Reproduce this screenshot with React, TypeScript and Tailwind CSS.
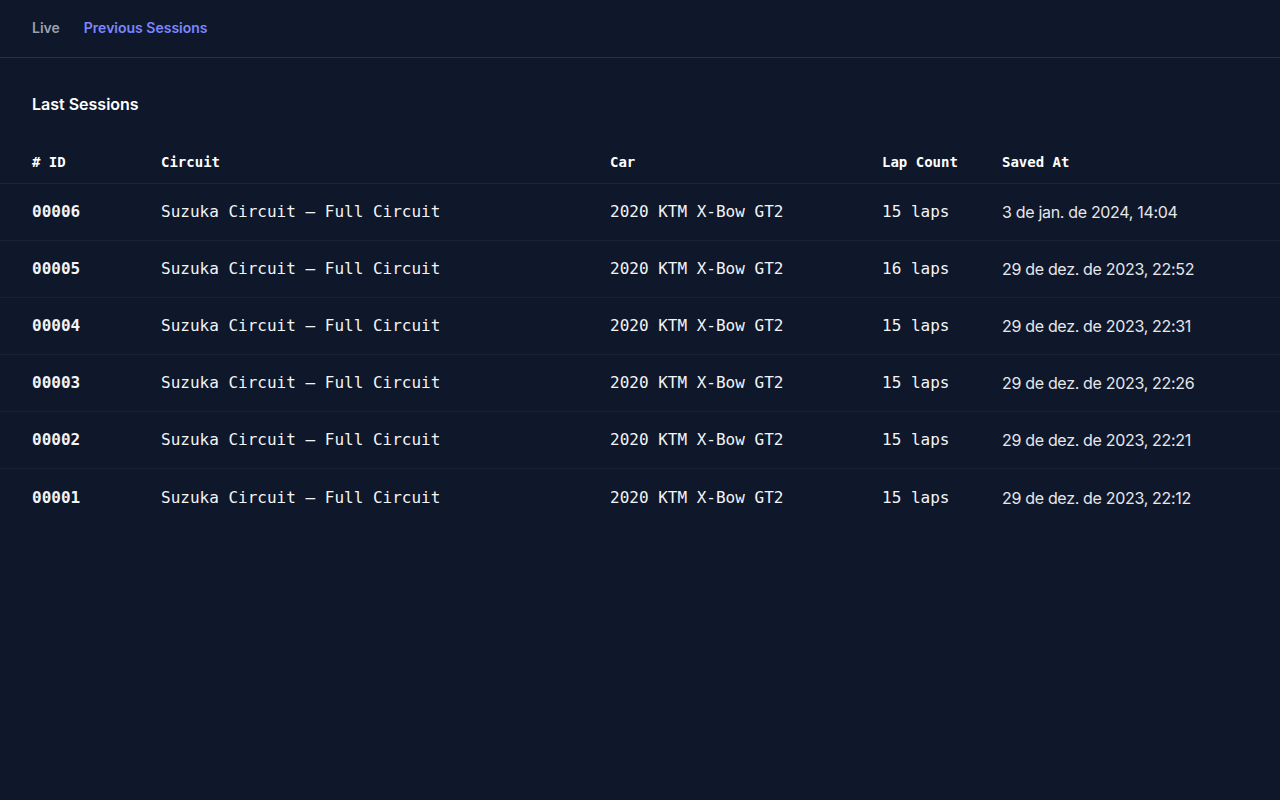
const sessions = [
  { id: '00006', circuit: 'Suzuka Circuit – Full Circuit', car: '2020 KTM X-Bow GT2', laps: 15, saved: '3 de jan. de 2024, 14:04' },
  { id: '00005', circuit: 'Suzuka Circuit – Full Circuit', car: '2020 KTM X-Bow GT2', laps: 16, saved: '29 de dez. de 2023, 22:52' },
  { id: '00004', circuit: 'Suzuka Circuit – Full Circuit', car: '2020 KTM X-Bow GT2', laps: 15, saved: '29 de dez. de 2023, 22:31' },
  { id: '00003', circuit: 'Suzuka Circuit – Full Circuit', car: '2020 KTM X-Bow GT2', laps: 15, saved: '29 de dez. de 2023, 22:26' },
  { id: '00002', circuit: 'Suzuka Circuit – Full Circuit', car: '2020 KTM X-Bow GT2', laps: 15, saved: '29 de dez. de 2023, 22:21' },
  { id: '00001', circuit: 'Suzuka Circuit – Full Circuit', car: '2020 KTM X-Bow GT2', laps: 15, saved: '29 de dez. de 2023, 22:12' },
]

const mono = "font-['DejaVu_Sans_Mono',monospace]"
const cols = 'grid grid-cols-[161px_449px_272px_120px_1fr]'

export default function App() {
  return (
    <div className="min-h-screen bg-[#0f172a] font-['Inter',sans-serif] text-white">
      {/* Tabs */}
      <nav className="flex h-[58px] items-center gap-6 border-b border-[#283142] px-8 pb-px text-sm font-semibold">
        <button className="text-gray-400">Live</button>
        <button className="text-indigo-400">Previous Sessions</button>
      </nav>

      <h2 className="mt-[34px] px-8 text-base leading-6 font-semibold">Last Sessions</h2>

      {/* Table */}
      <div className="mt-[25px]">
        <div className={`${cols} h-[43px] items-center border-b border-[#1f2736] pb-px text-sm font-bold ${mono}`}>
          <div className="pl-8"># ID</div>
          <div>Circuit</div>
          <div>Car</div>
          <div>Lap Count</div>
          <div>Saved At</div>
        </div>
        {sessions.map((s, i) => (
          <div
            key={s.id}
            className={`${cols} h-[57px] items-center text-base text-gray-100 ${i < sessions.length - 1 ? 'border-b border-[#1a2231]' : ''}`}
          >
            <div className={`pl-8 font-bold ${mono}`}>{s.id}</div>
            <div className={mono}>{s.circuit}</div>
            <div className={mono}>{s.car}</div>
            <div className={mono}>{s.laps} laps</div>
            <div className="tracking-[-0.02em] text-gray-200">{s.saved}</div>
          </div>
        ))}
      </div>
    </div>
  )
}
